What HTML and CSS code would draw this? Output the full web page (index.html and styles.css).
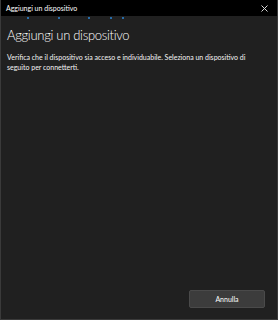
FILE: index.html
```html
<!DOCTYPE html>
<html lang="it">
<head>
<meta charset="utf-8">
<link rel="stylesheet" href="styles.css">
</head>
<body>
<div class="window">
  <div class="titlebar">
    <span class="title">Aggiungi un dispositivo</span>
    <svg class="close" width="7" height="7" viewBox="0 0 7 7"><path d="M0.5 0.5L6.5 6.5M6.5 0.5L0.5 6.5" stroke="#d8d8d8" stroke-width="1"/></svg>
  </div>
  <div class="progress">
    <span class="dot d1"></span><span class="dot d2"></span><span class="dot d3"></span><span class="dot d4"></span><span class="dot d5"></span>
  </div>
  <div class="content">
    <h1 class="heading">Aggiungi un dispositivo</h1>
    <p class="desc">Verifica che il dispositivo sia acceso e individuabile. Seleziona un dispositivo di seguito per connetterti.</p>
  </div>
  <div class="footer">
    <button class="btn">Annulla</button>
  </div>
</div>
</body>
</html>
```
FILE: styles.css
```css
html, body { margin: 0; padding: 0; }
body {
  width: 278px; height: 320px; background: #1f1f1f;
  font-family: Lato, "Open Sans", sans-serif;
  overflow: hidden;
}
.window {
  width: 278px; height: 320px; box-sizing: border-box;
  border-left: 1px solid #3a3a3a; border-right: 1px solid #3a3a3a; border-bottom: 1px solid #3a3a3a;
  display: flex; flex-direction: column; background: #202020;
}
.titlebar {
  height: 16px; background: #000; display: flex; align-items: center;
  justify-content: space-between; padding: 0 9px 0 5px; flex: none;
}
.title { color: #fff; font-size: 7px; }
.close { display: block; }
.progress { position: relative; height: 6px; flex: none; }
.dot { position: absolute; top: 1px; width: 2px; height: 2px; background: #2a86d6; border-radius: 1px; }
.d1 { left: 26px; } .d2 { left: 57px; } .d3 { left: 87px; } .d4 { left: 109px; } .d5 { left: 121px; }
.content { padding: 5px 6px 0 6px; flex: 1; }
.heading { margin: 0; color: #fff; font-weight: 300; font-size: 13px; line-height: 16px; letter-spacing: -0.3px; }
.desc { margin: 9px 0 0 0; color: #f4f4f4; font-size: 7px; line-height: 10px; padding-right: 14px; }
.footer { display: flex; justify-content: flex-end; padding: 0 12px 11px 0; flex: none; }
.btn {
  width: 76px; height: 18px; background: #3c3c3c; border: 1px solid #4a4a4a; border-radius: 2px;
  color: #fff; font-family: inherit; font-size: 7px; padding: 0;
}
```
